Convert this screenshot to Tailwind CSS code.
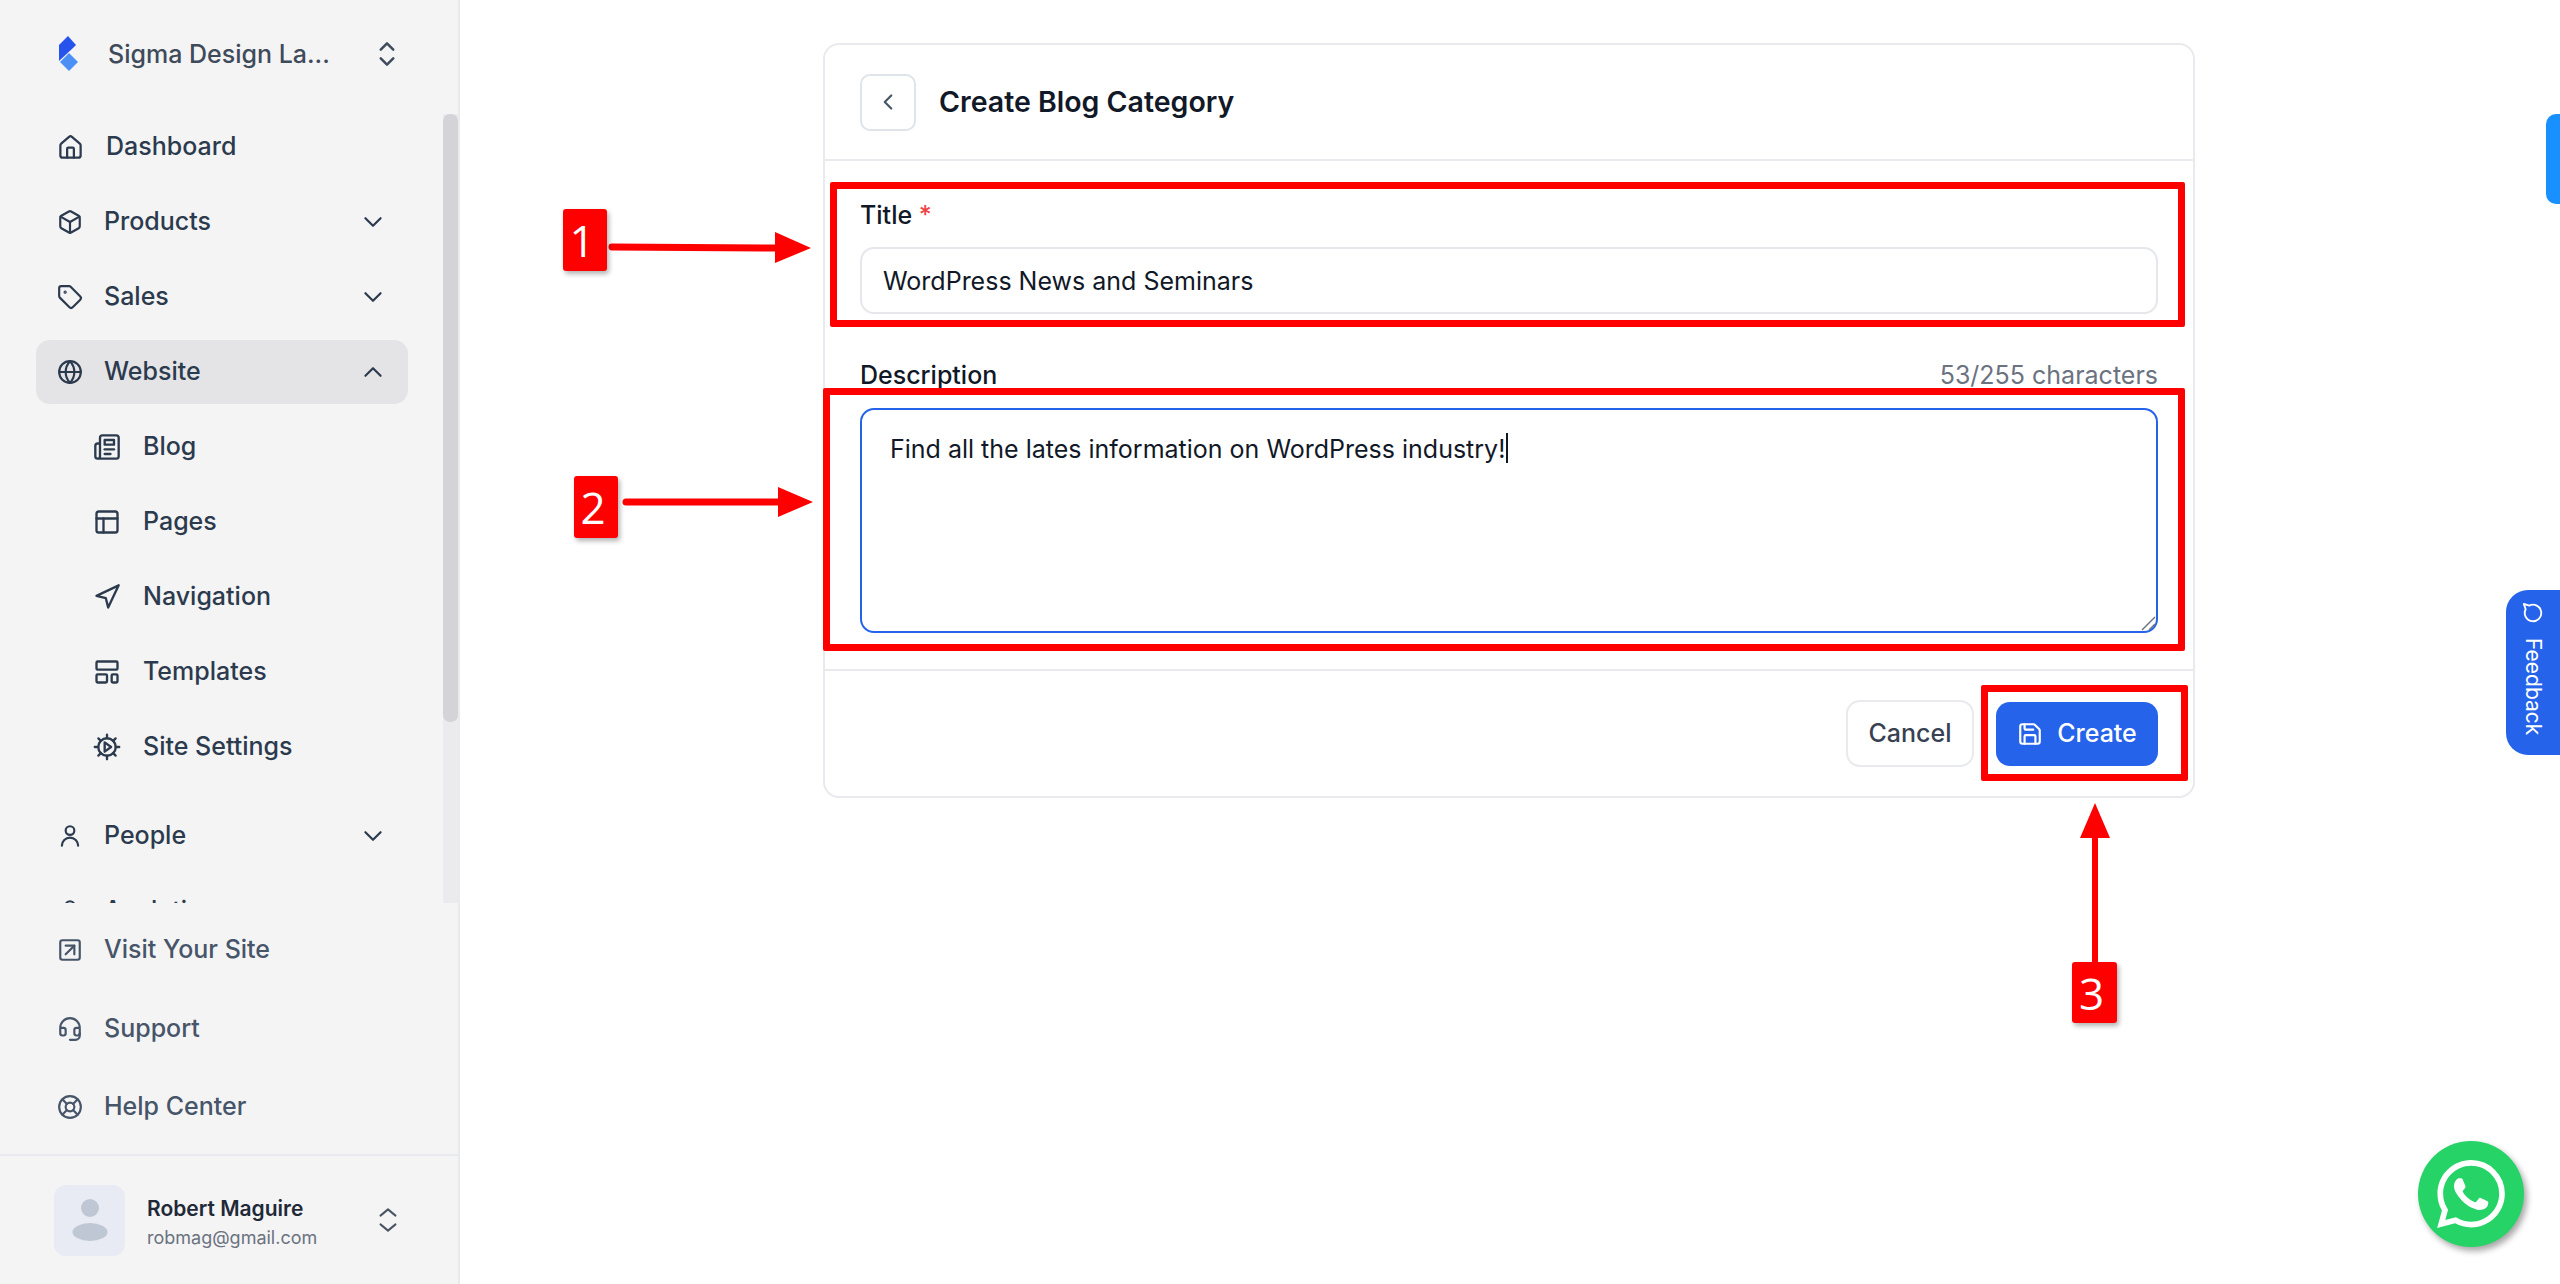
<!DOCTYPE html>
<html lang="en">
<head>
  <meta charset="UTF-8">
  <title>Create Blog Category</title>
  <script src="https://cdn.jsdelivr.net/npm/@tailwindcss/browser@4"></script>
</head>
<body class="relative flex h-[1284px] overflow-hidden bg-white font-['Inter',sans-serif] text-[25px] text-[#111827]">

  <!-- sidebar -->
  <aside class="flex h-full w-[460px] shrink-0 flex-col border-r-2 border-[#e9eaee] bg-[#f4f4f5] font-medium text-[#2c3a4e]">
    <div class="flex h-[114px] shrink-0 items-start pl-[58px] pt-[36px]">
      <svg class="w-[22px] h-[36px]" viewBox="0 0 22 36"><path d="M10 0l8 9-3 3-14 13V9z" fill="#2653eb"/><path d="M11 17l9 9-9 9-9-9z" fill="#4a90f5"/></svg>
      <span class="ml-[28px] w-[265px] leading-[36px] text-[#3f4a5a]">Sigma Design La...</span>
      <svg class="ml-[-1px] mt-[3px] w-[30px] h-[30px] text-[#3f4a5a]" viewBox="0 0 24 24" fill="none" stroke="currentColor" stroke-width="2" stroke-linecap="round" stroke-linejoin="round"><path d="M7 8.5l5-5 5 5"/><path d="M7 15.5l5 5 5-5"/></svg>
    </div>

    <div class="relative h-[789px] shrink-0 overflow-hidden">
      <nav class="flex flex-col gap-[11px] pl-[36px] pr-[50px] pt-[1px]">
        <a class="flex h-[64px] items-center pl-[21px]">
          <svg class="h-[27px] w-[27px]" viewBox="0 0 24 24" fill="none" stroke="currentColor" stroke-width="2" stroke-linecap="round" stroke-linejoin="round"><path d="M15 21v-8a1 1 0 0 0-1-1h-4a1 1 0 0 0-1 1v8"/><path d="M3 10a2 2 0 0 1 .709-1.528l7-5.999a2 2 0 0 1 2.582 0l7 5.999A2 2 0 0 1 21 10v9a2 2 0 0 1-2 2H5a2 2 0 0 1-2-2z"/></svg>
          <span class="ml-[22px]">Dashboard</span>
        </a>
        <a class="flex h-[64px] items-center pl-[21px]">
          <svg class="h-[26px] w-[26px]" viewBox="0 0 24 24" fill="none" stroke="currentColor" stroke-width="2" stroke-linecap="round" stroke-linejoin="round"><path d="M21 8a2 2 0 0 0-1-1.73l-7-4a2 2 0 0 0-2 0l-7 4A2 2 0 0 0 3 8v8a2 2 0 0 0 1 1.73l7 4a2 2 0 0 0 2 0l7-4A2 2 0 0 0 21 16Z"/><path d="m3.3 7 8.7 5 8.7-5"/><path d="M12 22V12"/></svg>
          <span class="ml-[21px] flex-1">Products</span>
          <svg class="mr-[22px] h-[26px] w-[26px]" viewBox="0 0 24 24" fill="none" stroke="currentColor" stroke-width="2" stroke-linecap="round" stroke-linejoin="round"><path d="m5 8.5 7 7 7-7"/></svg>
        </a>
        <a class="flex h-[64px] items-center pl-[21px]">
          <svg class="h-[26px] w-[26px]" viewBox="0 0 24 24" fill="none" stroke="currentColor" stroke-width="2" stroke-linecap="round" stroke-linejoin="round"><path d="M12.586 2.586A2 2 0 0 0 11.172 2H4a2 2 0 0 0-2 2v7.172a2 2 0 0 0 .586 1.414l8.704 8.704a2.426 2.426 0 0 0 3.42 0l6.58-6.58a2.426 2.426 0 0 0 0-3.42z"/><circle cx="7.5" cy="7.5" r=".5" fill="currentColor"/></svg>
          <span class="ml-[21px] flex-1">Sales</span>
          <svg class="mr-[22px] h-[26px] w-[26px]" viewBox="0 0 24 24" fill="none" stroke="currentColor" stroke-width="2" stroke-linecap="round" stroke-linejoin="round"><path d="m5 8.5 7 7 7-7"/></svg>
        </a>
        <a class="flex h-[64px] items-center rounded-[14px] bg-[#e4e4e7] pl-[21px]">
          <svg class="h-[26px] w-[26px]" viewBox="0 0 24 24" fill="none" stroke="currentColor" stroke-width="2" stroke-linecap="round" stroke-linejoin="round"><circle cx="12" cy="12" r="10"/><path d="M12 2a14.5 14.5 0 0 0 0 20 14.5 14.5 0 0 0 0-20"/><path d="M2 12h20"/></svg>
          <span class="ml-[21px] flex-1">Website</span>
          <svg class="mr-[22px] h-[26px] w-[26px]" viewBox="0 0 24 24" fill="none" stroke="currentColor" stroke-width="2" stroke-linecap="round" stroke-linejoin="round"><path d="m5 15.5 7-7 7 7"/></svg>
        </a>
        <a class="flex h-[64px] items-center pl-[57px]">
          <svg class="h-[28px] w-[28px]" viewBox="0 0 24 24" fill="none" stroke="currentColor" stroke-width="2" stroke-linecap="round" stroke-linejoin="round"><path d="M4 22h16a2 2 0 0 0 2-2V4a2 2 0 0 0-2-2H8a2 2 0 0 0-2 2v16a2 2 0 0 1-2 2Zm0 0a2 2 0 0 1-2-2v-9c0-1.1.9-2 2-2h2"/><path d="M18 14h-8"/><path d="M15 18h-5"/><path d="M10 6h8v4h-8V6Z"/></svg>
          <span class="ml-[22px]">Blog</span>
        </a>
        <a class="flex h-[64px] items-center pl-[57px]">
          <svg class="h-[28px] w-[28px]" viewBox="0 0 24 24" fill="none" stroke="currentColor" stroke-width="2" stroke-linecap="round" stroke-linejoin="round"><rect width="18" height="18" x="3" y="3" rx="2"/><path d="M3 9h18"/><path d="M9 21V9"/></svg>
          <span class="ml-[22px]">Pages</span>
        </a>
        <a class="flex h-[64px] items-center pl-[57px]">
          <svg class="h-[28px] w-[28px]" viewBox="0 0 24 24" fill="none" stroke="currentColor" stroke-width="2" stroke-linecap="round" stroke-linejoin="round"><polygon points="3 11 22 2 13 21 11 13 3 11"/></svg>
          <span class="ml-[22px]">Navigation</span>
        </a>
        <a class="flex h-[64px] items-center pl-[57px]">
          <svg class="h-[28px] w-[28px]" viewBox="0 0 24 24" fill="none" stroke="currentColor" stroke-width="2" stroke-linecap="round" stroke-linejoin="round"><rect width="18" height="7" x="3" y="3" rx="1"/><rect width="9" height="7" x="3" y="14" rx="1"/><rect width="5" height="7" x="16" y="14" rx="1"/></svg>
          <span class="ml-[22px]">Templates</span>
        </a>
        <a class="flex h-[64px] items-center pl-[57px]">
          <svg class="h-[28px] w-[28px]" viewBox="0 0 24 24" fill="none" stroke="currentColor" stroke-width="2" stroke-linecap="round" stroke-linejoin="round"><circle cx="12" cy="12" r="7.5"/><path d="M12 1.5v3M12 19.5v3M1.5 12h3M19.5 12h3M4.6 4.6l2.1 2.1M17.3 17.3l2.1 2.1M4.6 19.4l2.1-2.1M17.3 6.7l2.1-2.1"/><path d="M10 8l5.5 4-5.5 4z"/></svg>
          <span class="ml-[22px]">Site Settings</span>
        </a>
        <a class="mt-[14px] flex h-[64px] items-center pl-[21px]">
          <svg class="h-[26px] w-[26px]" viewBox="0 0 24 24" fill="none" stroke="currentColor" stroke-width="2" stroke-linecap="round" stroke-linejoin="round"><circle cx="12" cy="7" r="4"/><path d="M4.5 21a7.5 7.5 0 0 1 15 0"/></svg>
          <span class="ml-[21px] flex-1">People</span>
          <svg class="mr-[22px] h-[26px] w-[26px]" viewBox="0 0 24 24" fill="none" stroke="currentColor" stroke-width="2" stroke-linecap="round" stroke-linejoin="round"><path d="m5 8.5 7 7 7-7"/></svg>
        </a>
        <a class="flex h-[64px] items-center pl-[21px]">
          <svg class="h-[26px] w-[26px]" viewBox="0 0 24 24" fill="none" stroke="currentColor" stroke-width="2" stroke-linecap="round" stroke-linejoin="round"><circle cx="12" cy="7" r="4"/><path d="M4.5 21a7.5 7.5 0 0 1 15 0"/></svg>
          <span class="ml-[21px] flex-1">Analytics</span>
        </a>
      </nav>
      <!-- scrollbar -->
      <div class="absolute right-0 top-0 h-full w-[15px] bg-[#ebebed]">
        <div class="h-[608px] rounded-[7px] bg-[#d4d4d8]"></div>
      </div>
    </div>

    <div class="flex flex-1 flex-col justify-between pl-[57px] pt-[8px] text-[#475569]">
      <div class="flex flex-col">
        <a class="flex h-[78px] items-center">
          <svg class="h-[26px] w-[26px]" viewBox="0 0 24 24" fill="none" stroke="currentColor" stroke-width="2" stroke-linecap="round" stroke-linejoin="round"><rect width="18" height="18" x="3" y="3" rx="2"/><path d="M8 8h8v8"/><path d="m8 16 8-8"/></svg>
          <span class="ml-[21px]">Visit Your Site</span>
        </a>
        <a class="flex h-[79px] items-center">
          <svg class="h-[26px] w-[26px]" viewBox="0 0 24 24" fill="none" stroke="currentColor" stroke-width="2" stroke-linecap="round" stroke-linejoin="round"><path d="M3 11h3a2 2 0 0 1 2 2v3a2 2 0 0 1-2 2H5a2 2 0 0 1-2-2v-5Zm0 0a9 9 0 1 1 18 0m0 0v5a2 2 0 0 1-2 2h-1a2 2 0 0 1-2-2v-3a2 2 0 0 1 2-2h3Z"/><path d="M21 16v2a4 4 0 0 1-4 4h-5"/></svg>
          <span class="ml-[21px]">Support</span>
        </a>
        <a class="flex h-[78px] items-center">
          <svg class="h-[26px] w-[26px]" viewBox="0 0 24 24" fill="none" stroke="currentColor" stroke-width="2" stroke-linecap="round" stroke-linejoin="round"><circle cx="12" cy="12" r="10"/><path d="m4.93 4.93 4.24 4.24"/><path d="m14.83 9.17 4.24-4.24"/><path d="m14.83 14.83 4.24 4.24"/><path d="m9.17 14.83-4.24 4.24"/><circle cx="12" cy="12" r="4"/></svg>
          <span class="ml-[21px]">Help Center</span>
        </a>
      </div>
    </div>

    <div class="flex h-[130px] shrink-0 items-start border-t-2 border-[#e9eaee] pl-[54px] pt-[29px]">
      <div class="flex h-[71px] w-[71px] items-center justify-center rounded-[12px] bg-[#e8ebf3]">
        <svg class="h-[44px] w-[36px]" viewBox="0 0 36 44" fill="#c0c7d4"><circle cx="18" cy="9" r="9"/><ellipse cx="18" cy="33" rx="17.5" ry="9"/></svg>
      </div>
      <div class="ml-[22px] w-[227px] pt-[9px]">
        <div class="text-[21px] leading-[30px] font-semibold text-[#1f2937]">Robert Maguire</div>
        <div class="text-[18px] leading-[28px] font-normal text-[#6b7280]">robmag@gmail.com</div>
      </div>
      <svg class="ml-[-1px] mt-[20px] h-[30px] w-[30px] text-[#4b5563]" viewBox="0 0 24 24" fill="none" stroke="currentColor" stroke-width="1.6" stroke-linecap="round" stroke-linejoin="round"><path d="M6 8.5l6-5 6 5"/><path d="M6 15.5l6 5 6-5"/></svg>
    </div>
  </aside>

  <!-- main form -->
  <main class="flex-1 pl-[363px] pt-[43px]">
    <div class="w-[1372px] rounded-[16px] border-2 border-[#e9eaee] bg-white">
      <div class="flex h-[116px] items-center border-b-2 border-[#e9eaee] pl-[35px]">
        <button class="flex h-[57px] w-[56px] items-center justify-center rounded-[10px] border-2 border-[#dfe3ea] text-[#475569]">
          <svg class="h-[26px] w-[26px]" viewBox="0 0 24 24" fill="none" stroke="currentColor" stroke-width="2" stroke-linecap="round" stroke-linejoin="round"><path d="m15 18-6-6 6-6"/></svg>
        </button>
        <h1 class="ml-[23px] text-[28.5px] font-semibold text-[#111827]">Create Blog Category</h1>
      </div>

      <div class="px-[35px] pt-[36px]">
        <label class="block leading-[36px] font-medium">Title <span class="text-[#ef4444]">*</span></label>
        <input class="mt-[14px] block h-[67px] w-[1298px] rounded-[14px] border-2 border-[#e5e7eb] px-[21px] text-[25px] text-[#111827] outline-none" value="WordPress News and Seminars">
        <div class="mt-[43px] flex justify-between leading-[36px]">
          <label class="font-medium">Description</label>
          <span class="text-[#6b7280]">53/255 characters</span>
        </div>
        <textarea class="mt-[15px] block h-[225px] w-[1298px] resize-none rounded-[14px] border-2 border-[#2563eb] px-[28px] pt-[21px] text-[25px] leading-[36px] text-[#111827] outline-none">Find all the lates information on WordPress industry!</textarea>
      </div>

      <div class="mt-[36px] flex h-[127px] items-center justify-end gap-[22px] border-t-2 border-[#e9eaee] pr-[35px]">
        <button class="h-[67px] w-[128px] rounded-[14px] border-2 border-[#e9eaee] font-medium text-[#374151]">Cancel</button>
        <button class="flex h-[64px] w-[162px] items-center justify-center gap-[14px] rounded-[14px] bg-[#2563eb] font-medium text-white">
          <svg class="h-[26px] w-[26px]" viewBox="0 0 24 24" fill="none" stroke="currentColor" stroke-width="2" stroke-linecap="round" stroke-linejoin="round"><path d="M15.2 3a2 2 0 0 1 1.4.6l3.8 3.8a2 2 0 0 1 .6 1.4V19a2 2 0 0 1-2 2H5a2 2 0 0 1-2-2V5a2 2 0 0 1 2-2z"/><path d="M17 21v-7a1 1 0 0 0-1-1H8a1 1 0 0 0-1 1v7"/><path d="M7 3v4a1 1 0 0 0 1 1h7"/></svg>
          Create
        </button>
      </div>
    </div>
  </main>

  <!-- text caret and resize grip in the textarea -->
  <div class="absolute left-[1506px] top-[433px] h-[30px] w-[2px] bg-[#111827]"></div>
  <svg class="absolute left-[2140px] top-[615px] h-[16px] w-[16px]" viewBox="0 0 16 16" fill="none" stroke="#6b7280" stroke-width="1.5"><path d="M2 15L15 2"/><path d="M9 15L15 9"/></svg>

  <!-- annotations -->
  <div class="absolute left-[830px] top-[182px] h-[145px] w-[1355px] rounded-[2px] border-[7px] border-[#ff0000]"></div>
  <div class="absolute left-[823px] top-[388px] h-[263px] w-[1362px] rounded-[2px] border-[7px] border-[#ff0000]"></div>
  <div class="absolute left-[1981px] top-[685px] h-[96px] w-[207px] rounded-[2px] border-[7px] border-[#ff0000]"></div>

  <svg class="absolute left-0 top-0 h-[1284px] w-[2560px]" viewBox="0 0 2560 1284" fill="#ff0000" stroke="none">
    <path d="M612 247L775 248" stroke="#ff0000" stroke-width="7" stroke-linecap="round"/>
    <path d="M775 232L811 248 775 263z"/>
    <path d="M626 502H780" stroke="#ff0000" stroke-width="7" stroke-linecap="round"/>
    <path d="M778 487L813 502 778 517z"/>
    <path d="M2095 964V836" stroke="#ff0000" stroke-width="6"/>
    <path d="M2080 838L2095 803 2110 838z"/>
  </svg>

  <div class="absolute left-[563px] top-[209px] flex h-[62px] w-[44px] items-center justify-center rounded-[3px] bg-[#ff0000] pr-[6px] font-['Open_Sans',sans-serif] text-[44px] text-white shadow-[2px_3px_5px_rgba(0,0,0,0.3)]">1</div>
  <div class="absolute left-[574px] top-[476px] flex h-[62px] w-[44px] items-center justify-center rounded-[3px] bg-[#ff0000] pr-[6px] font-['Open_Sans',sans-serif] text-[44px] text-white shadow-[2px_3px_5px_rgba(0,0,0,0.3)]">2</div>
  <div class="absolute left-[2072px] top-[962px] flex h-[61px] w-[45px] items-center justify-center rounded-[3px] bg-[#ff0000] pr-[6px] font-['Open_Sans',sans-serif] text-[44px] text-white shadow-[2px_3px_5px_rgba(0,0,0,0.3)]">3</div>

  <!-- floating widgets -->
  <div class="absolute right-0 top-[114px] h-[90px] w-[14px] rounded-l-[10px] bg-[#1890ff]"></div>
  <div class="absolute right-0 top-[590px] flex h-[165px] w-[54px] flex-col items-center gap-[14px] rounded-l-[22px] bg-[#2563eb] pt-[12px] text-white">
    <svg class="h-[22px] w-[22px] rotate-90" viewBox="0 0 24 24" fill="none" stroke="currentColor" stroke-width="2" stroke-linecap="round" stroke-linejoin="round"><path d="M7.9 20A9 9 0 1 0 4 16.1L2 22Z"/></svg>
    <span class="text-[21px] leading-[24px] [writing-mode:vertical-rl]">Feedback</span>
  </div>
  <div class="absolute left-[2418px] top-[1141px] flex h-[106px] w-[106px] items-center justify-center rounded-full bg-[#25d366] shadow-[3px_4px_6px_rgba(0,0,0,0.35)]">
    <svg class="h-[68px] w-[68px]" viewBox="0 0 24 24" fill="#ffffff"><path d="M17.472 14.382c-.297-.149-1.758-.867-2.03-.967-.273-.099-.471-.148-.67.15-.197.297-.767.966-.94 1.164-.173.199-.347.223-.644.075-.297-.15-1.255-.463-2.39-1.475-.883-.788-1.48-1.761-1.653-2.059-.173-.297-.018-.458.13-.606.134-.133.298-.347.446-.52.149-.174.198-.298.298-.497.099-.198.05-.371-.025-.52-.075-.149-.669-1.612-.916-2.207-.242-.579-.487-.5-.669-.51-.173-.008-.371-.01-.57-.01-.198 0-.52.074-.792.372-.272.297-1.04 1.016-1.04 2.479 0 1.462 1.065 2.875 1.213 3.074.149.198 2.096 3.2 5.077 4.487.709.306 1.262.489 1.694.625.712.227 1.36.195 1.871.118.571-.085 1.758-.719 2.006-1.413.248-.694.248-1.289.173-1.413-.074-.124-.272-.198-.57-.347m-5.421 7.403h-.004a9.87 9.87 0 01-5.031-1.378l-.361-.214-3.741.982.998-3.648-.235-.374a9.86 9.86 0 01-1.51-5.26c.001-5.45 4.436-9.884 9.888-9.884 2.64 0 5.122 1.03 6.988 2.898a9.825 9.825 0 012.893 6.994c-.003 5.45-4.437 9.884-9.885 9.884m8.413-18.297A11.815 11.815 0 0012.05 0C5.495 0 .16 5.335.157 11.892c0 2.096.547 4.142 1.588 5.945L.057 24l6.305-1.654a11.882 11.882 0 005.683 1.448h.005c6.554 0 11.89-5.335 11.893-11.893a11.821 11.821 0 00-3.48-8.413Z"/></svg>
  </div>
</body>
</html>
